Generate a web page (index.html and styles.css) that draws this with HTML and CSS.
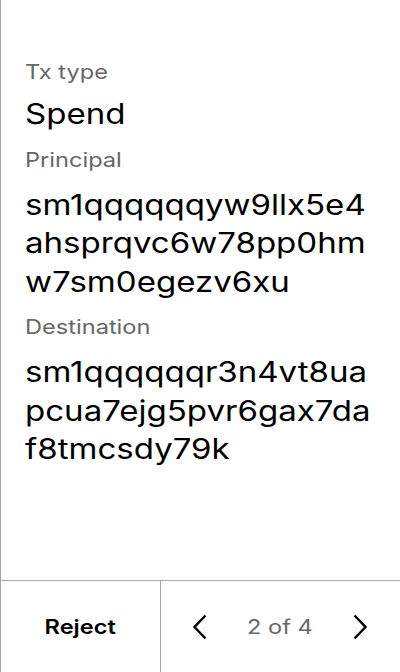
FILE: index.html
```html
<!DOCTYPE html>
<html>
<head>
<meta charset="utf-8">
<link rel="stylesheet" href="styles.css">
</head>
<body>
<div class="screen">
  <main class="content">
    <div class="field field-type">
      <div class="label">Tx type</div>
      <div class="value">Spend</div>
    </div>
    <div class="field">
      <div class="label">Principal</div>
      <div class="value">sm1qqqqqqyw9llx5e4<br>ahsprqvc6w78pp0hm<br>w7sm0egezv6xu</div>
    </div>
    <div class="field">
      <div class="label">Destination</div>
      <div class="value">sm1qqqqqqr3n4vt8ua<br>pcua7ejg5pvr6gax7da<br>f8tmcsdy79k</div>
    </div>
  </main>
  <footer class="footer">
    <div class="reject"><span class="btn-text">Reject</span></div>
    <div class="pager">
      <svg class="chev" width="16" height="26" viewBox="0 0 16 26"><path d="M13.5 1.5 L2.5 13 L13.5 24.5" fill="none" stroke="#000" stroke-width="2.4"/></svg>
      <span class="count">2 of 4</span>
      <svg class="chev" width="16" height="26" viewBox="0 0 16 26"><path d="M2.5 1.5 L13.5 13 L2.5 24.5" fill="none" stroke="#000" stroke-width="2.4"/></svg>
    </div>
  </footer>
</div>
</body>
</html>
```
FILE: styles.css
```css
html, body {
  margin: 0;
  padding: 0;
  background: #fff;
}
body {
  font-family: Inter, "Noto Sans", sans-serif;
  color: #000;
}
.screen {
  width: 400px;
  height: 672px;
  box-sizing: border-box;
  border-left: 1px solid #a8a8a8;
  display: flex;
  flex-direction: column;
  overflow: hidden;
}
.content {
  flex: 1;
  padding: 58px 24px 0 24px;
  display: flex;
  flex-direction: column;
  gap: 12px;
}
.field {
  display: flex;
  flex-direction: column;
  align-items: flex-start;
  gap: 12px;
}
.field-type {
  gap: 9px;
}
.label,
.value {
  transform: scaleX(1.18);
  transform-origin: 0 0;
  white-space: nowrap;
}
.label {
  font-size: 20px;
  line-height: 28px;
  color: #676767;
}
.value {
  font-size: 28px;
  line-height: 38.5px;
  color: #000;
}
.footer {
  height: 92px;
  border-top: 1px solid #a8a8a8;
  box-sizing: border-box;
  display: flex;
}
.reject {
  width: 160px;
  border-right: 1px solid #a8a8a8;
  box-sizing: border-box;
  display: flex;
  align-items: center;
  justify-content: center;
}
.btn-text {
  font-size: 20px;
  font-weight: 600;
  display: inline-block;
  transform: scaleX(1.18);
}
.pager {
  flex: 1;
  display: flex;
  align-items: center;
  justify-content: space-between;
  padding: 0 32px 0 31px;
}
.count {
  font-size: 20px;
  color: #676767;
  display: inline-block;
  transform: scaleX(1.18);
}
.chev {
  display: block;
}
```
